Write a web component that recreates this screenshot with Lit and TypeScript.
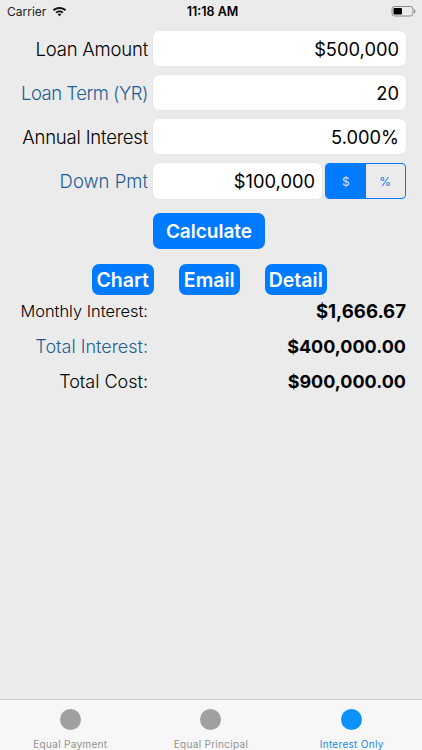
import { LitElement, html, css } from "lit";
import { customElement } from "lit/decorators.js";

@customElement("app-root")
export class AppRoot extends LitElement {
  static styles = css`
    :host {
      display: flex;
      flex-direction: column;
      width: 422px;
      height: 750px;
      background: #ebebeb;
      font-family: "Inter", "Liberation Sans", sans-serif;
      color: #000;
      overflow: hidden;
    }
    .status {
      height: 22px;
      display: grid;
      grid-template-columns: 1fr auto 1fr;
      align-items: center;
      padding: 0 6px 0 7px;
      font-size: 12px;
      flex: none;
    }
    .status .left { display: flex; align-items: center; gap: 6px; color: #222; }
    .status .time { font-weight: 600; font-size: 12.5px; position: relative; left: 1px; }
    .status .right { display: flex; justify-content: flex-end; }
    .form {
      flex: 1;
      display: flex;
      flex-direction: column;
      padding: 9px 16px 0 0;
    }
    .row {
      display: grid;
      grid-template-columns: 148px 1fr;
      column-gap: 5px;
      height: 35px;
      margin-bottom: 9px;
      align-items: center;
    }
    .label {
      text-align: right;
      font-size: 18.5px;
      font-weight: 300;
      letter-spacing: -0.2px;
      white-space: nowrap;
    }
    .label.tight { letter-spacing: -0.5px; }
    .label.wide { letter-spacing: 0; }
    .blue { color: #1f5f96; }
    .field {
      background: #fff;
      border-radius: 6px;
      height: 100%;
      display: flex;
      align-items: center;
      justify-content: flex-end;
      padding: 0 7px;
      font-size: 18.3px;
      font-weight: 400;
      box-shadow: 0 0 0 0.5px #e2e2e2;
    }
    .split {
      display: grid;
      grid-template-columns: 1fr 81px;
      gap: 3px;
      height: 100%;
      align-items: center;
    }
    .seg {
      display: grid;
      grid-template-columns: 1fr 1fr;
      border: 1px solid #007aff;
      border-radius: 4px;
      overflow: hidden;
      font-size: 12px;
      color: #007aff;
      height: 36px;
      box-sizing: border-box;
    }
    .seg span { display: flex; align-items: center; justify-content: center; }
    .seg .on { background: #007aff; color: #cfe4ff; }
    .btn {
      background: #007aff;
      color: #fff;
      font-weight: 600;
      display: flex;
      align-items: center;
      justify-content: center;
      border-radius: 7px;
    }
    .calc-row { padding-left: 153px; margin-top: 6px; }
    .calc { width: 112px; height: 36px; font-size: 19px; }
    .actions {
      display: flex;
      gap: 25px;
      padding-left: 92px;
      margin-top: 15px;
    }
    .actions .btn { width: 61.5px; height: 31px; font-size: 19.5px; }
    .result {
      display: grid;
      grid-template-columns: 148px 1fr;
      height: 35.5px;
      align-items: center;
    }
    .results { margin-top: -2px; }
    .result .k { text-align: right; font-size: 18px; font-weight: 300; white-space: nowrap; }
    .result .k.small { font-size: 16.4px; }
    .result .v { text-align: right; font-size: 18px; font-weight: 700; }
    .result .v.big { font-size: 18.6px; }
    .tabs {
      flex: none;
      height: 50px;
      background: #f7f7f7;
      border-top: 1px solid #d0d0d0;
      display: grid;
      grid-template-columns: repeat(3, 1fr);
    }
    .tab {
      display: flex;
      flex-direction: column;
      align-items: center;
      color: #929292;
      font-size: 10px;
      font-weight: 400;
      letter-spacing: 0.3px;
      padding-top: 9px;
      gap: 8px;
    }
    .tab i { width: 21px; height: 21px; border-radius: 50%; background: #a0a0a0; display: block; }
    .tab.active { color: #1b87e6; }
    .tab.active i { background: #0a93ff; }
  `;

  render() {
    return html`
      <div class="status">
        <div class="left">
          <span>Carrier</span>
          <svg width="15" height="11" viewBox="0 0 15 11">
            <path d="M7.5 1C4.9 1 2.6 2 .8 3.6l1.3 1.4C3.5 3.8 5.4 3 7.5 3s4 .8 5.4 2l1.3-1.4C12.4 2 10.1 1 7.5 1z" fill="#111"/>
            <path d="M7.5 4.4c-1.6 0-3 .6-4.1 1.5l1.3 1.4c.8-.6 1.7-1 2.8-1s2 .4 2.8 1l1.3-1.4c-1.1-.9-2.5-1.5-4.1-1.5z" fill="#111"/>
            <path d="M7.5 7.6c-.8 0-1.4.3-1.9.7l1.9 2 1.9-2c-.5-.4-1.1-.7-1.9-.7z" fill="#111"/>
          </svg>
        </div>
        <div class="time">11:18 AM</div>
        <div class="right">
          <svg width="25" height="12" viewBox="0 0 25 12">
            <rect x="1" y="1.5" width="21" height="9.5" rx="2.5" fill="none" stroke="#8a8a8a" stroke-width="1"/>
            <rect x="2.5" y="3" width="8.5" height="6.5" rx="1" fill="#000"/>
            <rect x="23" y="4.5" width="1.2" height="3.5" rx="0.6" fill="#8a8a8a"/>
          </svg>
        </div>
      </div>
      <div class="form">
        <div class="row">
          <div class="label">Loan Amount</div>
          <div class="field">$500,000</div>
        </div>
        <div class="row">
          <div class="label blue tight">Loan Term (YR)</div>
          <div class="field">20</div>
        </div>
        <div class="row">
          <div class="label">Annual Interest</div>
          <div class="field">5.000%</div>
        </div>
        <div class="row">
          <div class="label blue wide">Down Pmt</div>
          <div class="split">
            <div class="field">$100,000</div>
            <div class="seg"><span class="on">$</span><span>%</span></div>
          </div>
        </div>
        <div class="calc-row"><div class="btn calc">Calculate</div></div>
        <div class="actions">
          <div class="btn">Chart</div>
          <div class="btn">Email</div>
          <div class="btn">Detail</div>
        </div>
        <div class="results">
          <div class="result"><div class="k small">Monthly Interest:</div><div class="v big">$1,666.67</div></div>
          <div class="result"><div class="k blue">Total Interest:</div><div class="v">$400,000.00</div></div>
          <div class="result"><div class="k">Total Cost:</div><div class="v">$900,000.00</div></div>
        </div>
      </div>
      <div class="tabs">
        <div class="tab"><i></i><span>Equal Payment</span></div>
        <div class="tab"><i></i><span>Equal Principal</span></div>
        <div class="tab active"><i></i><span>Interest Only</span></div>
      </div>
    `;
  }
}
